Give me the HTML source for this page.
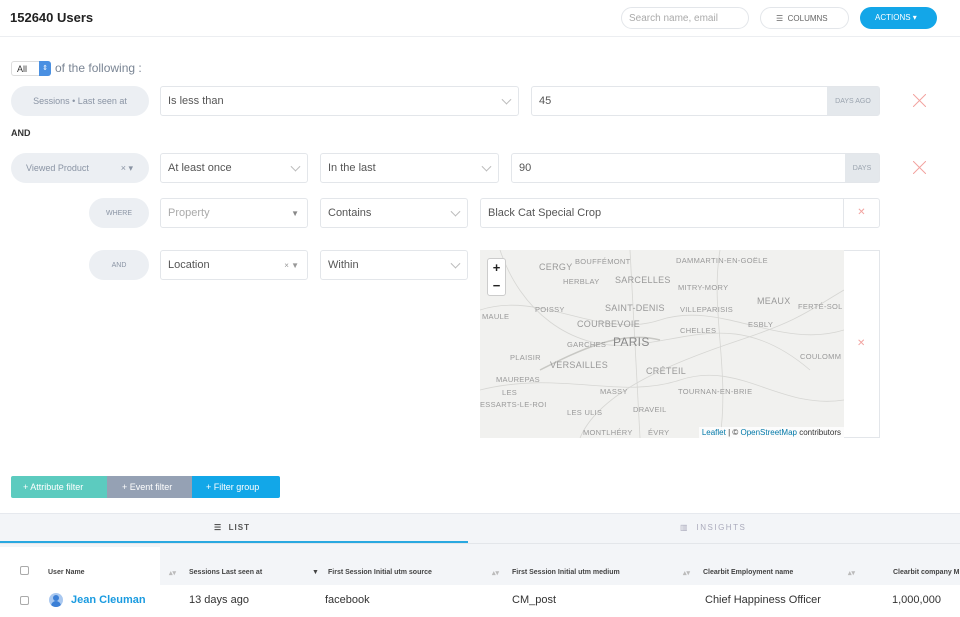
<!DOCTYPE html><html><head><style>
*{box-sizing:border-box;margin:0;padding:0}
body{width:960px;height:617px;overflow:hidden;background:#fff;font-family:"Liberation Sans",sans-serif;color:#333;position:relative}
.a{position:absolute}
.box{position:absolute;border:1px solid #e3e6ea;border-radius:3px;background:#fff;font-size:11px;color:#555;padding-left:7px;display:flex;align-items:center}
.pill{position:absolute;background:#eceff3;border-radius:16px;font-size:9px;color:#8a94a4;display:flex;align-items:center;justify-content:center}
.chev{position:absolute;right:8px;top:50%;width:7px;height:7px;border-right:1px solid #bbb;border-bottom:1px solid #bbb;transform:translateY(-70%) rotate(45deg)}
.tri{position:absolute;right:8px;font-size:8px;color:#888}
.x{position:absolute}
.unit{position:absolute;right:0;top:0;bottom:0;background:#e4e8ec;font-size:7px;color:#9aa3ae;display:flex;align-items:center;justify-content:center}
.ml{position:absolute;font-size:7.5px;color:#999;letter-spacing:.3px}
.th{position:absolute;top:569px;font-size:7px;color:#444;font-weight:bold}
</style></head><body>
<div class="a" style="left:0;top:0;width:960px;height:37px;border-bottom:1px solid #eceef1"></div>
<div class="a" style="left:10px;top:10px;font-size:13px;font-weight:bold;color:#222">152640 Users</div>
<div class="a" style="left:621px;top:7px;width:128px;height:22px;border:1px solid #e3e6ea;border-radius:11px;font-size:10px;color:#aaa;padding:5px 7px">Search name, email</div>
<div class="a" style="left:760px;top:7px;width:89px;height:22px;border:1px solid #e3e6ea;border-radius:11px;font-size:8px;color:#666;padding:6px 0 0 15px">☰&nbsp; COLUMNS</div>
<div class="a" style="left:860px;top:7px;width:77px;height:22px;background:#13a6e8;border-radius:11px;font-size:8px;color:#fff;padding:6px 0 0 15px">ACTIONS ▾</div>

<div class="a" style="left:11px;top:61px;width:40px;height:15px;border:1px solid #ddd;border-radius:3px;font-size:9px;padding:2px 5px">All</div>
<div class="a" style="left:39px;top:61px;width:12px;height:15px;background:#4a90e2;border-radius:0 3px 3px 0;color:#fff;font-size:7px;text-align:center;line-height:15px">⇕</div>
<div class="a" style="left:55px;top:61px;font-size:12px;color:#7a8594">of the following :</div>

<div class="pill" style="left:11px;top:86px;width:138px;height:30px">Sessions • Last seen at</div>
<div class="box" style="left:160px;top:86px;width:359px;height:30px">Is less than<span class="chev"></span></div>
<div class="box" style="left:531px;top:86px;width:349px;height:30px">45<span class="unit" style="width:52px">DAYS AGO</span></div>
<svg class="x" style="left:913px;top:94px" width="13" height="13" stroke="#f2a3a0" stroke-width="1"><path d="M0 0L13 13M13 0L0 13"/></svg>
<div class="a" style="left:11px;top:128px;font-size:9px;font-weight:bold;color:#333">AND</div>

<div class="pill" style="left:11px;top:153px;width:138px;height:30px;justify-content:flex-start;padding-left:15px">Viewed Product<span style="position:absolute;right:16px;font-size:9px">× ▾</span></div>
<div class="box" style="left:160px;top:153px;width:148px;height:30px">At least once<span class="chev"></span></div>
<div class="box" style="left:320px;top:153px;width:179px;height:30px">In the last<span class="chev"></span></div>
<div class="box" style="left:511px;top:153px;width:369px;height:30px">90<span class="unit" style="width:34px">DAYS</span></div>
<svg class="x" style="left:913px;top:161px" width="13" height="13" stroke="#f2a3a0" stroke-width="1"><path d="M0 0L13 13M13 0L0 13"/></svg>

<div class="pill" style="left:89px;top:198px;width:60px;height:30px;font-size:7px">WHERE</div>
<div class="box" style="left:160px;top:198px;width:148px;height:30px;color:#aaa">Property<span class="tri">▼</span></div>
<div class="box" style="left:320px;top:198px;width:148px;height:30px">Contains<span class="chev"></span></div>
<div class="box" style="left:480px;top:198px;width:400px;height:30px">Black Cat Special Crop<span style="position:absolute;right:0;top:0;bottom:0;width:36px;border-left:1px solid #e3e6ea;color:#f2a3a0;font-size:10px;text-align:center;line-height:28px">✕</span></div>

<div class="pill" style="left:89px;top:250px;width:60px;height:30px;font-size:7px">AND</div>
<div class="box" style="left:160px;top:250px;width:148px;height:30px">Location<span class="tri" style="color:#999">× ▼</span></div>
<div class="box" style="left:320px;top:250px;width:148px;height:30px">Within<span class="chev"></span></div>
<div class="a" style="left:480px;top:250px;width:400px;height:188px;border:1px solid #e3e6ea"></div>
<div class="a" style="left:480px;top:250px;width:364px;height:188px;background:#f1f1ef;overflow:hidden">
<svg width="364" height="188" style="position:absolute;left:0;top:0" fill="none" stroke="#d6d6d3" stroke-width="0.8"><path d="M0 60 C60 40 120 90 180 70 S300 100 364 80"/><path d="M20 0 C40 60 90 100 150 95 S260 60 330 120"/><path d="M0 140 C80 120 140 150 200 130 S300 160 364 150"/><path d="M150 0 L160 188"/><path d="M240 0 C230 60 250 120 240 188"/><path d="M100 188 C120 140 200 110 260 90 S330 60 364 40"/><path d="M60 120 C100 100 140 80 180 90" stroke="#c8c8c4" stroke-width="1.5"/></svg>
<div class="ml" style="left:59px;top:12px;font-size:9px">CERGY</div>
<div class="ml" style="left:95px;top:7px">BOUFFÉMONT</div>
<div class="ml" style="left:196px;top:6px">DAMMARTIN-EN-GOËLE</div>
<div class="ml" style="left:83px;top:27px">HERBLAY</div>
<div class="ml" style="left:135px;top:25px;font-size:9px">SARCELLES</div>
<div class="ml" style="left:198px;top:33px">MITRY-MORY</div>
<div class="ml" style="left:277px;top:46px;font-size:9px">MEAUX</div>
<div class="ml" style="left:55px;top:55px">POISSY</div>
<div class="ml" style="left:125px;top:53px;font-size:9px">SAINT-DENIS</div>
<div class="ml" style="left:200px;top:55px">VILLEPARISIS</div>
<div class="ml" style="left:318px;top:52px">FERTÉ-SOL</div>
<div class="ml" style="left:2px;top:62px">MAULE</div>
<div class="ml" style="left:97px;top:69px;font-size:9px">COURBEVOIE</div>
<div class="ml" style="left:268px;top:70px">ESBLY</div>
<div class="ml" style="left:200px;top:76px">CHELLES</div>
<div class="ml" style="left:87px;top:90px">GARCHES</div>
<div class="ml" style="left:133px;top:85px;font-size:12px;color:#888">PARIS</div>
<div class="ml" style="left:30px;top:103px">PLAISIR</div>
<div class="ml" style="left:70px;top:110px;font-size:9px">VERSAILLES</div>
<div class="ml" style="left:166px;top:116px;font-size:9px">CRÉTEIL</div>
<div class="ml" style="left:320px;top:102px">COULOMM</div>
<div class="ml" style="left:16px;top:125px">MAUREPAS</div>
<div class="ml" style="left:120px;top:137px">MASSY</div>
<div class="ml" style="left:198px;top:137px">TOURNAN-EN-BRIE</div>
<div class="ml" style="left:22px;top:138px">LES</div>
<div class="ml" style="left:0;top:150px">ESSARTS-LE-ROI</div>
<div class="ml" style="left:153px;top:155px">DRAVEIL</div>
<div class="ml" style="left:87px;top:158px">LES ULIS</div>
<div class="ml" style="left:103px;top:178px">MONTLHÉRY</div>
<div class="ml" style="left:168px;top:178px">ÉVRY</div>
<div class="a" style="right:0;bottom:0;background:rgba(255,255,255,.8);font-size:8px;color:#333;padding:1px 3px"><span style="color:#0078a8">Leaflet</span> | © <span style="color:#0078a8">OpenStreetMap</span> contributors</div>
<div class="a" style="left:7px;top:8px;width:19px;height:38px;background:#fff;border:1px solid #ccc;border-radius:3px;font-size:13px;font-weight:bold;text-align:center;line-height:18px;color:#222">+<br>−</div>
</div>
<div class="a" style="left:857px;top:338px;color:#f2a3a0;font-size:10px">✕</div>

<div class="a" style="left:11px;top:476px;width:97px;height:22px;background:#5ccbbf;color:#fff;font-size:9px;padding:6px 0 0 12px;border-radius:2px 0 0 2px">+ Attribute filter</div>
<div class="a" style="left:107px;top:476px;width:85px;height:22px;background:#95a1b4;color:#fff;font-size:9px;padding:6px 0 0 15px">+ Event filter</div>
<div class="a" style="left:192px;top:476px;width:88px;height:22px;background:#12a7e8;color:#fff;font-size:9px;padding:6px 0 0 14px;border-radius:0 2px 2px 0">+ Filter group</div>

<div class="a" style="left:0;top:513px;width:960px;height:104px;background:#f3f5f8;border-top:1px solid #e6e9ee"></div>
<div class="a" style="left:0;top:541px;width:468px;height:2px;background:#29a8e0"></div>
<div class="a" style="left:0;top:543px;width:960px;height:1px;background:#e3e6ea"></div>
<div class="a" style="left:214px;top:523px;font-size:8px;color:#555;letter-spacing:1px;font-weight:bold">☰&nbsp; LIST</div>
<div class="a" style="left:680px;top:523px;font-size:8px;color:#aab;letter-spacing:1.5px">▥&nbsp; INSIGHTS</div>
<div class="a" style="left:0;top:547px;width:160px;height:70px;background:#fff"></div>
<div class="a" style="left:0;top:585px;width:960px;height:32px;background:#fff"></div>
<div class="a" style="left:20px;top:566px;width:9px;height:9px;border:1px solid #aaa;border-radius:2px;background:#fff"></div>
<div class="th" style="left:48px">User Name</div>
<div class="th" style="left:169px;color:#bbb">▴▾</div><div class="th" style="left:189px">Sessions Last seen at</div>
<div class="th" style="left:312px">▼</div><div class="th" style="left:328px">First Session Initial utm source</div>
<div class="th" style="left:492px;color:#bbb">▴▾</div><div class="th" style="left:512px">First Session Initial utm medium</div>
<div class="th" style="left:683px;color:#bbb">▴▾</div><div class="th" style="left:703px">Clearbit Employment name</div>
<div class="th" style="left:848px;color:#bbb">▴▾</div><div class="th" style="left:893px">Clearbit company M</div>
<div class="a" style="left:20px;top:596px;width:9px;height:9px;border:1px solid #aaa;border-radius:2px"></div>
<div class="a" style="left:49px;top:593px;width:14px;height:14px;border-radius:7px;background:#a9c8f0;overflow:hidden"><div class="a" style="left:4px;top:2px;width:6px;height:6px;border-radius:3px;background:#3b7fd6"></div><div class="a" style="left:2px;top:8px;width:10px;height:6px;border-radius:5px 5px 0 0;background:#3b7fd6"></div></div>
<div class="a" style="left:71px;top:594px;font-size:11px;color:#1a9be0;font-weight:bold">Jean Cleuman</div>
<div class="a" style="left:189px;top:594px;font-size:11px">13 days ago</div>
<div class="a" style="left:325px;top:594px;font-size:11px">facebook</div>
<div class="a" style="left:512px;top:594px;font-size:11px">CM_post</div>
<div class="a" style="left:705px;top:594px;font-size:11px">Chief Happiness Officer</div>
<div class="a" style="left:892px;top:594px;font-size:11px">1,000,000</div>
</body></html>
